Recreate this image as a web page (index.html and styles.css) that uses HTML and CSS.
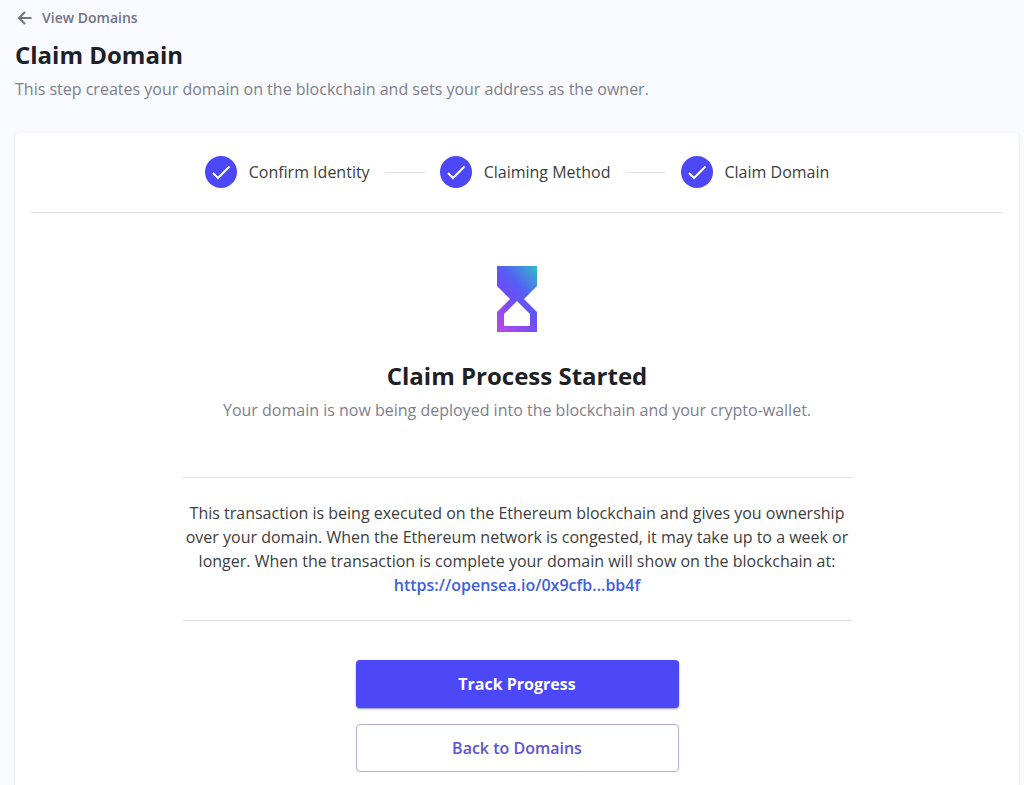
FILE: index.html
```html
<!DOCTYPE html>
<html lang="en">
<head>
    <meta charset="UTF-8">
    <meta name="viewport" content="width=device-width, initial-scale=1.0">
    <link rel="stylesheet" href="styles.css">
    <title>Claim Domain</title>
</head>
<body>
    <header class="page-header">
        <a href="#" class="back-link">
            <svg class="back-icon" viewBox="0 0 20 20" aria-hidden="true">
                <path d="M16.5 10H4M10 4L4 10l6 6" />
            </svg>
            View Domains
        </a>
        <h1>Claim Domain</h1>
        <p class="subtitle">This step creates your domain on the blockchain and sets your address as the owner.</p>
    </header>

    <main class="card">
        <ol class="steps">
            <li class="step">
                <svg class="step-icon" viewBox="0 0 32 32" aria-hidden="true">
                    <circle cx="16" cy="16" r="16" />
                    <path d="M8 17l5 5L24.500 10.500" />
                </svg>
                <span>Confirm Identity</span>
            </li>
            <li class="step">
                <svg class="step-icon" viewBox="0 0 32 32" aria-hidden="true">
                    <circle cx="16" cy="16" r="16" />
                    <path d="M8 17l5 5L24.500 10.500" />
                </svg>
                <span>Claiming Method</span>
            </li>
            <li class="step">
                <svg class="step-icon" viewBox="0 0 32 32" aria-hidden="true">
                    <circle cx="16" cy="16" r="16" />
                    <path d="M8 17l5 5L24.500 10.500" />
                </svg>
                <span>Claim Domain</span>
            </li>
        </ol>

        <section class="status">
            <svg class="hourglass" viewBox="0 0 40 66" aria-hidden="true">
                <defs>
                    <linearGradient id="hourglassFill" gradientUnits="userSpaceOnUse" x1="-8" y1="52" x2="44" y2="8">
                        <stop offset="0" stop-color="#b848e6" />
                        <stop offset="0.45" stop-color="#6a4ff5" />
                        <stop offset="0.65" stop-color="#5460f4" />
                        <stop offset="1" stop-color="#35b4cc" />
                    </linearGradient>
                </defs>
                <path fill="url(#hourglassFill)" fill-rule="evenodd" d="M0 0h40v20L27 33l13 13v20H0V46l13-13L0 20zM20 35L7 48v12h26V48z" />
            </svg>
            <h2>Claim Process Started</h2>
            <p class="subtitle">Your domain is now being deployed into the blockchain and your crypto-wallet.</p>
        </section>

        <p class="notice">
            This transaction is being executed on the Ethereum blockchain and gives you ownership over your domain. When the Ethereum network is congested, it may take up to a week or longer. When the transaction is complete your domain will show on the blockchain at:
            <a href="#" class="notice-link">https://opensea.io/0x9cfb...bb4f</a>
        </p>

        <div class="actions">
            <button type="button" class="button button-primary">Track Progress</button>
            <button type="button" class="button button-outline">Back to Domains</button>
        </div>
    </main>
</body>
</html>
```

FILE: styles.css
```css
* {
    box-sizing: border-box;
}

body {
    display: flex;
    flex-direction: column;
    min-height: 100vh;
    margin: 0;
    padding: 6px 5px 0 15px;
    background-color: #f8faff;
    color: #3c3d40;
    font-family: "Open Sans", sans-serif;
    font-size: 16px;
    line-height: 24px;
}

h1,
h2 {
    margin: 0;
    color: #1d2025;
    font-size: 24px;
    font-weight: 700;
    line-height: 32px;
}

.page-header {
    margin-bottom: 32px;
}

.back-link {
    display: inline-flex;
    align-items: center;
    gap: 7px;
    color: #72747f;
    font-size: 14px;
    font-weight: 600;
    text-decoration: none;
}

.back-icon {
    width: 20px;
    height: 20px;
    fill: none;
    stroke: currentColor;
    stroke-width: 2;
}

.page-header h1 {
    margin-top: 5px;
}

.subtitle {
    margin: 6px 0 0;
    color: #7d808c;
}

.card {
    flex: 1;
    padding: 0 16px 12px;
    background-color: #fff;
    border-radius: 4px 4px 0 0;
    box-shadow: 0 1px 3px rgba(40, 50, 90, 0.16);
}

.steps {
    display: flex;
    justify-content: center;
    margin: 0;
    padding: 23px 0 24px;
    border-bottom: 1px solid #e3e4e8;
    list-style: none;
}

.step {
    display: flex;
    align-items: center;
    gap: 12px;
}

/* connector between two steps */
.step + .step::before {
    content: "";
    width: 40px;
    height: 1px;
    margin: 0 3px 0 15px;
    background-color: #e3e4e8;
}

.step-icon {
    width: 32px;
    height: 32px;
}

.step-icon circle {
    fill: #4c47f7;
}

.step-icon path {
    fill: none;
    stroke: #fff;
    stroke-width: 2;
}

.status {
    padding: 53px 0 55px;
    text-align: center;
}

.hourglass {
    display: block;
    width: 40px;
    height: 66px;
    margin: 0 auto 28px;
}

.notice {
    max-width: 670px;
    margin: 0 auto;
    padding: 23px 0;
    border-top: 1px solid #e3e4e8;
    border-bottom: 1px solid #e3e4e8;
    text-align: center;
}

.notice-link {
    display: block;
    color: #3d60dc;
    font-weight: 600;
    text-decoration: none;
}

.actions {
    display: flex;
    flex-direction: column;
    gap: 16px;
    max-width: 323px;
    margin: 39px auto 0;
}

.button {
    height: 48px;
    border: none;
    border-radius: 4px;
    font-family: inherit;
    font-size: 16px;
    cursor: pointer;
}

.button-primary {
    background-color: #4c47f7;
    box-shadow: 0 1px 2px rgba(40, 40, 120, 0.5);
    color: #fff;
    font-weight: 700;
}

.button-outline {
    background-color: #fff;
    border: 1px solid #aeaed8;
    color: #5a55d0;
    font-weight: 600;
}
```
